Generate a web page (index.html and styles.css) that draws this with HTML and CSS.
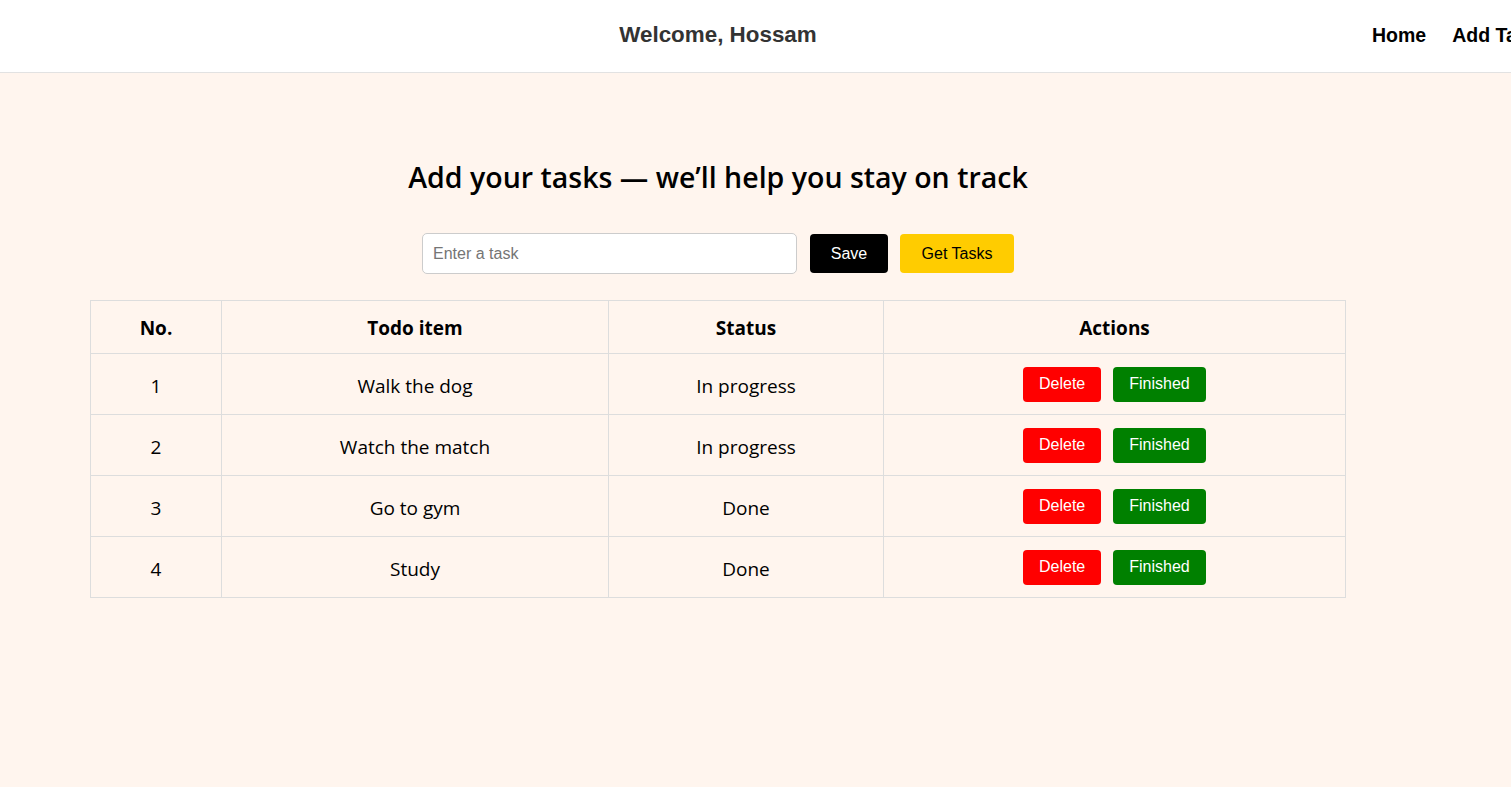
FILE: index.html
```html
<!DOCTYPE html>
<html lang="en">
<head>
<meta charset="utf-8">
<title>Todo</title>
<link rel="stylesheet" href="styles.css">
</head>
<body>
<header class="topbar">
  <div class="topbar-inner">
    <h1 class="welcome">Welcome, Hossam</h1>
    <nav class="nav">
      <a class="nav-link" href="#">Home</a>
      <a class="nav-link" href="#">Add Tasks</a>
    </nav>
  </div>
</header>
<main class="main">
  <h2 class="title">Add your tasks — we’ll help you stay on track</h2>
  <form class="task-form">
    <input class="task-input" type="text" placeholder="Enter a task">
    <button class="btn btn-save" type="button">Save</button>
    <button class="btn btn-get" type="button">Get Tasks</button>
  </form>
  <table class="tasks">
    <thead>
      <tr>
        <th class="col-no">No.</th>
        <th class="col-item">Todo item</th>
        <th class="col-status">Status</th>
        <th class="col-actions">Actions</th>
      </tr>
    </thead>
    <tbody>
      <tr>
        <td>1</td><td>Walk the dog</td><td>In progress</td>
        <td class="cell-actions"><div class="actions"><button class="btn-sm btn-delete" type="button">Delete</button><button class="btn-sm btn-finish" type="button">Finished</button></div></td>
      </tr>
      <tr>
        <td>2</td><td>Watch the match</td><td>In progress</td>
        <td class="cell-actions"><div class="actions"><button class="btn-sm btn-delete" type="button">Delete</button><button class="btn-sm btn-finish" type="button">Finished</button></div></td>
      </tr>
      <tr>
        <td>3</td><td>Go to gym</td><td>Done</td>
        <td class="cell-actions"><div class="actions"><button class="btn-sm btn-delete" type="button">Delete</button><button class="btn-sm btn-finish" type="button">Finished</button></div></td>
      </tr>
      <tr>
        <td>4</td><td>Study</td><td>Done</td>
        <td class="cell-actions"><div class="actions"><button class="btn-sm btn-delete" type="button">Delete</button><button class="btn-sm btn-finish" type="button">Finished</button></div></td>
      </tr>
    </tbody>
  </table>
</main>
</body>
</html>
```

FILE: styles.css
```css
* { box-sizing: border-box; }
html, body { margin: 0; padding: 0; }
body {
  background: #fff5ee;
  font-family: "Open Sans", "Noto Sans", sans-serif;
  color: #000;
  overflow: hidden;
  min-height: 787px;
}
.topbar {
  background: #fff;
  border-bottom: 1px solid #e2e2e2;
  height: 73px;
}
.topbar-inner {
  width: 1436px;
  height: 72px;
  padding-bottom: 2px;
  display: grid;
  grid-template-columns: 64px 1fr 64px;
  align-items: center;
}
.welcome {
  grid-column: 2;
  margin: 0;
  text-align: center;
  font-family: "Liberation Sans", Arial, sans-serif;
  font-weight: 700;
  font-size: 22.4px;
  color: #333;
}
.nav {
  grid-column: 3;
  display: flex;
  gap: 26px;
  white-space: nowrap;
}
.nav-link {
  font-family: "Liberation Sans", Arial, sans-serif;
  font-weight: 700;
  font-size: 19.5px;
  color: #000;
  text-decoration: none;
}
.main {
  width: 1436px;
  display: flex;
  flex-direction: column;
  align-items: center;
}
.title {
  margin: 86px 0 0;
  font-size: 28.5px;
  line-height: 36px;
  font-weight: 600;
}
.task-form {
  margin-top: 38px;
  display: flex;
  align-items: center;
  gap: 12px;
}
.task-input {
  width: 375px;
  height: 41px;
  border: 1px solid #ccc;
  border-radius: 5px;
  background: #fff;
  padding: 0 10px;
  font-family: "Liberation Sans", Arial, sans-serif;
  font-size: 16px;
  margin-right: 1px;
}
.task-input::placeholder { color: #757575; }
.btn {
  height: 39px;
  border: none;
  border-radius: 4px;
  padding: 0 20px;
  font-family: "Liberation Sans", Arial, sans-serif;
  font-size: 16px;
}
.btn-save { background: #000; color: #fff; width: 78px; }
.btn-get { background: #ffcc00; color: #000; width: 114px; }
.tasks {
  margin-top: 26px;
  width: 1256px;
  border-collapse: collapse;
  table-layout: fixed;
  font-size: 19px;
}
.tasks th, .tasks td {
  border: 1px solid #ddd;
  text-align: center;
  padding: 0;
}
.tasks th { height: 53px; font-weight: 700; padding-top: 2px; }
.tasks td { height: 61px; font-weight: 400; padding-top: 4px; }
.tasks td.cell-actions { padding-top: 0; }
.col-no { width: 131px; }
.col-item { width: 387px; }
.col-status { width: 275px; }
.col-actions { width: 462px; }
.actions {
  display: flex;
  justify-content: center;
  gap: 12px;
}
.btn-sm {
  height: 35px;
  border: none;
  border-radius: 4px;
  padding: 0 16px;
  color: #fff;
  font-family: "Liberation Sans", Arial, sans-serif;
  font-size: 16px;
}
.btn-delete { background: #ff0000; width: 78px; }
.btn-finish { background: #008000; width: 93px; }
```
